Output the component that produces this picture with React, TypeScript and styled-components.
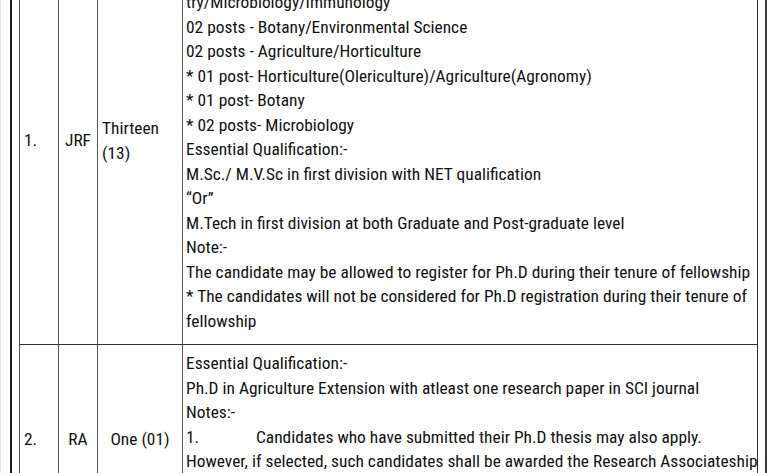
import { FC, ReactNode } from 'react';
import styled, { createGlobalStyle } from 'styled-components';

const GlobalStyle = createGlobalStyle`
    html, body {
        margin: 0;
        padding: 0;
        background: #fff;
        overflow: hidden;
    }
    body {
        font-family: "Roboto Condensed", "Liberation Sans", sans-serif;
        color: #111;
    }
`;

const Page = styled.div`
    height: 473px;
    overflow: hidden;
    display: flex;
    padding-left: 2px;
    border-left: 1px solid #e4e4e4;
    box-sizing: border-box;
`;

const Frame = styled.div`
    flex: 1;
    margin-left: 7px;
    margin-right: 1px;
    padding: 0 7px 0 7px;
    border-left: 2px solid #1a1a1a;
    border-right: 2px solid #3a3a3a;
    margin-top: -64px;
    height: 620px;
`;

const Table = styled.table`
    width: 100%;
    border-collapse: collapse;
    table-layout: fixed;
    font-size: 17.4px;
    font-weight: 400;
    line-height: 24.5px;
    border-left: 1.5px solid #333;
    border-right: 1.5px solid #333;
`;

const SideCell = styled.td<{ $align: 'left' | 'center' }>`
    vertical-align: middle;
    text-align: ${({ $align }) => $align};
    padding: ${({ $align }) => ($align === 'left' ? '0 2px 0 4px' : '0 2px')};
    border: 1.5px solid #555;
    border-top: 1.5px solid #333;
    border-bottom: 1.5px solid #333;
    white-space: nowrap;
`;

const DetailCell = styled.td<{ $padTop: number }>`
    vertical-align: top;
    padding: ${({ $padTop }) => $padTop}px 3px 11px 3px;
    border: 1.5px solid #333;
`;

const Line = styled.div`
    white-space: nowrap;
`;

const Numeral = styled.span`
    display: inline-block;
    width: 70px;
`;

interface Post {
    no: string;
    name: string;
    count: ReactNode;
    countAlign: 'left' | 'center';
    details: ReactNode[];
    padTop: number;
}

const posts: Post[] = [
    {
        no: '1.',
        name: 'JRF',
        count: <>Thirteen<br />(13)</>,
        countAlign: 'left',
        padTop: 4,
        details: [
            'Subject:-',
            '05 posts - Agricultural Biotechnology/Biotechnology/Biochemis-',
            'try/Microbiology/Immunology',
            '02 posts - Botany/Environmental Science',
            '02 posts - Agriculture/Horticulture',
            '* 01 post- Horticulture(Olericulture)/Agriculture(Agronomy)',
            '* 01 post- Botany',
            '* 02 posts- Microbiology',
            'Essential Qualification:-',
            'M.Sc./ M.V.Sc in first division with NET qualification',
            '\u201cOr\u201d',
            'M.Tech in first division at both Graduate and Post-graduate level',
            'Note:-',
            'The candidate may be allowed to register for Ph.D during their tenure of fellowship',
            '* The candidates will not be considered for Ph.D registration during their tenure of',
            'fellowship',
        ],
    },
    {
        no: '2.',
        name: 'RA',
        count: 'One (01)',
        countAlign: 'center',
        padTop: 6,
        details: [
            'Essential Qualification:-',
            'Ph.D in Agriculture Extension with atleast one research paper in SCI journal',
            'Notes:-',
            <><Numeral>1.</Numeral>Candidates who have submitted their Ph.D thesis may also apply.</>,
            'However, if selected, such candidates shall be awarded the Research Associateship',
            'only after the award of Ph.D degree. Till then they will be paid as SRF.',
            '2.',
        ],
    },
];

const App: FC = () => (
    <>
        <GlobalStyle />
        <Page>
            <Frame>
                <Table>
                    <colgroup>
                        <col width={39} />
                        <col width={39} />
                        <col width={85} />
                        <col />
                    </colgroup>
                    <tbody>
                        {posts.map((p) => (
                            <tr key={p.no}>
                                <SideCell $align="left">{p.no}</SideCell>
                                <SideCell $align="center">{p.name}</SideCell>
                                <SideCell $align={p.countAlign}>{p.count}</SideCell>
                                <DetailCell $padTop={p.padTop}>
                                    {p.details.map((d, i) => (
                                        <Line key={i}>{d}</Line>
                                    ))}
                                </DetailCell>
                            </tr>
                        ))}
                    </tbody>
                </Table>
            </Frame>
        </Page>
    </>
);

export default App;
